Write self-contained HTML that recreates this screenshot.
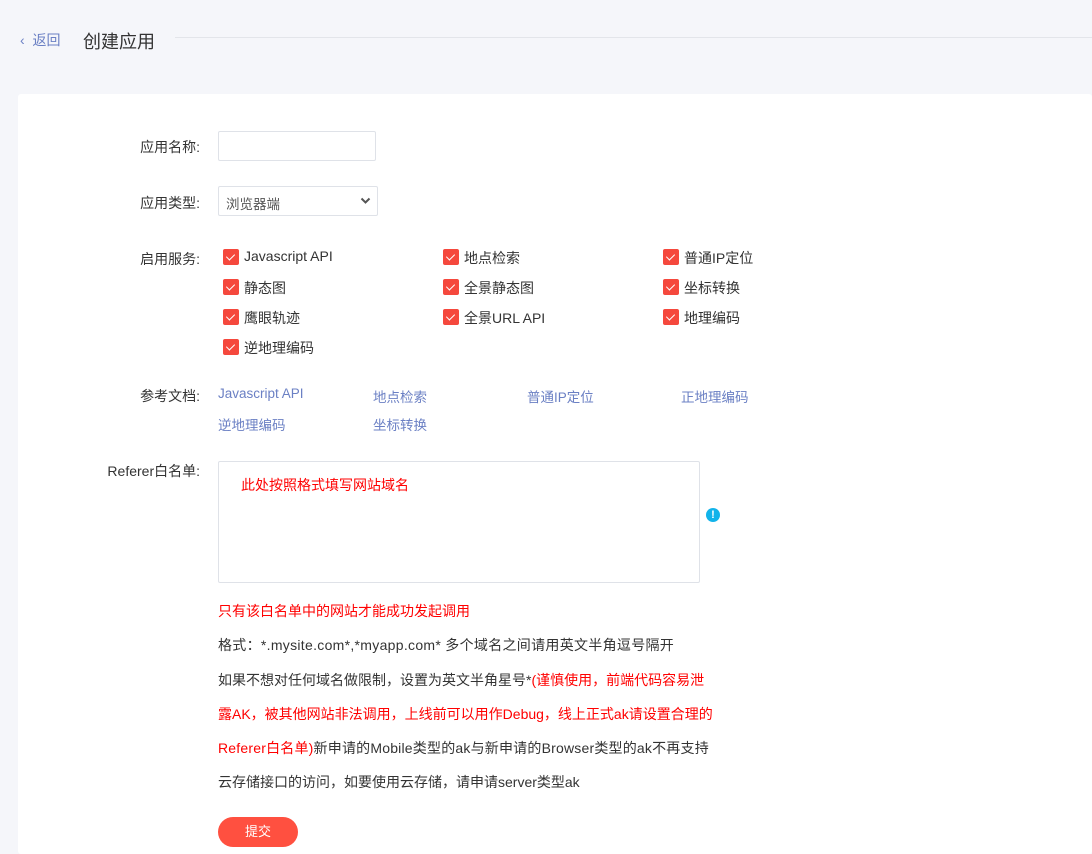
<!DOCTYPE html>
<html><head><meta charset="utf-8"><style>
*{margin:0;padding:0;box-sizing:border-box}
body{width:1092px;height:853px;background:#f5f6fa;font-family:"Liberation Sans","Noto Sans CJK SC",sans-serif;color:#333;position:relative;overflow:hidden;font-size:14px}
.a{position:absolute;white-space:nowrap}
.card{position:absolute;left:18px;top:94px;width:1074px;height:760px;background:#fff;border-radius:3px}
.lbl{position:absolute;width:200px;left:0;text-align:right;font-size:14px;color:#333}
.cb{position:absolute;width:16px;height:16px;background:#f5483d;border-radius:2px}
.cb:after{content:"";position:absolute;left:5px;top:3px;width:4px;height:7px;border:solid #fff;border-width:0 1.5px 1.5px 0;transform:rotate(45deg)}
.ct{position:absolute;font-size:14px;color:#333}
.lk{position:absolute;font-size:13.5px;color:#6b80c4}
.ln{position:absolute;left:218px;font-size:14px;color:#333;white-space:nowrap}
.red{color:#f00 !important}
</style></head><body>
<div class="a" style="left:20px;top:30px;color:#6b80c4;font-size:14px">‹&nbsp;&nbsp;返回</div>
<div class="a" style="left:83px;top:28px;font-size:18px;color:#333">创建应用</div>
<div class="a" style="left:175px;top:37px;width:917px;height:1px;background:#e3e5ea"></div>
<div class="card"></div>
<div class="lbl" style="top:137px">应用名称:</div>
<div class="a" style="left:218px;top:131px;width:158px;height:30px;border:1px solid #dfe2e8;border-radius:2px"></div>
<div class="lbl" style="top:193px">应用类型:</div>
<div class="a" style="left:218px;top:186px;width:160px;height:30px;border:1px solid #dfe2e8;border-radius:2px;font-size:13.5px;padding:6px 0 0 7px;color:#555">浏览器端<svg style="position:absolute;right:6px;top:10px" width="11" height="8" viewBox="0 0 11 8"><path d="M1.5 1.5l4 4 4-4" fill="none" stroke="#555" stroke-width="2"/></svg></div>
<div class="lbl" style="top:249px">启用服务:</div>
<div class="cb" style="left:223px;top:249px"></div><div class="ct" style="left:244px;top:248px">Javascript API</div>
<div class="cb" style="left:443px;top:249px"></div><div class="ct" style="left:464px;top:248px">地点检索</div>
<div class="cb" style="left:663px;top:249px"></div><div class="ct" style="left:684px;top:248px">普通IP定位</div>
<div class="cb" style="left:223px;top:279px"></div><div class="ct" style="left:244px;top:278px">静态图</div>
<div class="cb" style="left:443px;top:279px"></div><div class="ct" style="left:464px;top:278px">全景静态图</div>
<div class="cb" style="left:663px;top:279px"></div><div class="ct" style="left:684px;top:278px">坐标转换</div>
<div class="cb" style="left:223px;top:309px"></div><div class="ct" style="left:244px;top:308px">鹰眼轨迹</div>
<div class="cb" style="left:443px;top:309px"></div><div class="ct" style="left:464px;top:308px">全景URL API</div>
<div class="cb" style="left:663px;top:309px"></div><div class="ct" style="left:684px;top:308px">地理编码</div>
<div class="cb" style="left:223px;top:339px"></div><div class="ct" style="left:244px;top:338px">逆地理编码</div>
<div class="lbl" style="top:386px">参考文档:</div>
<div class="lk" style="left:218px;top:386px">Javascript API</div>
<div class="lk" style="left:373px;top:386px">地点检索</div>
<div class="lk" style="left:527px;top:386px">普通IP定位</div>
<div class="lk" style="left:681px;top:386px">正地理编码</div>
<div class="lk" style="left:218px;top:414px">逆地理编码</div>
<div class="lk" style="left:373px;top:414px">坐标转换</div>
<div class="lbl" style="top:461px">Referer白名单:</div>
<div class="a" style="left:218px;top:461px;width:482px;height:122px;border:1px solid #dfe2e8;border-radius:2px"></div>
<div class="a red" style="left:241px;top:475px;font-size:14px">此处按照格式填写网站域名</div>
<div class="a" style="left:706px;top:508px;width:14px;height:14px;border-radius:50%;background:#12b3ea;color:#fff;font-size:11px;font-weight:bold;text-align:center;line-height:14px">!</div>
<div class="ln red" style="top:601px">只有该白名单中的网站才能成功发起调用</div>
<div class="ln" style="top:635px;letter-spacing:0.3px">格式：*.mysite.com*,*myapp.com* 多个域名之间请用英文半角逗号隔开</div>
<div class="ln" style="top:670px">如果不想对任何域名做限制，设置为英文半角星号*<span class="red">(谨慎使用，前端代码容易泄</span></div>
<div class="ln red" style="top:704px">露AK，被其他网站非法调用，上线前可以用作Debug，线上正式ak请设置合理的</div>
<div class="ln" style="top:738px;letter-spacing:0.2px"><span class="red">Referer白名单)</span>新申请的Mobile类型的ak与新申请的Browser类型的ak不再支持</div>
<div class="ln" style="top:772px">云存储接口的访问，如要使用云存储，请申请server类型ak</div>
<div class="a" style="left:218px;top:817px;width:80px;height:30px;border-radius:15px;background:#ff5040;color:#fff;font-size:13px;text-align:center;line-height:30px">提交</div>
</body></html>
